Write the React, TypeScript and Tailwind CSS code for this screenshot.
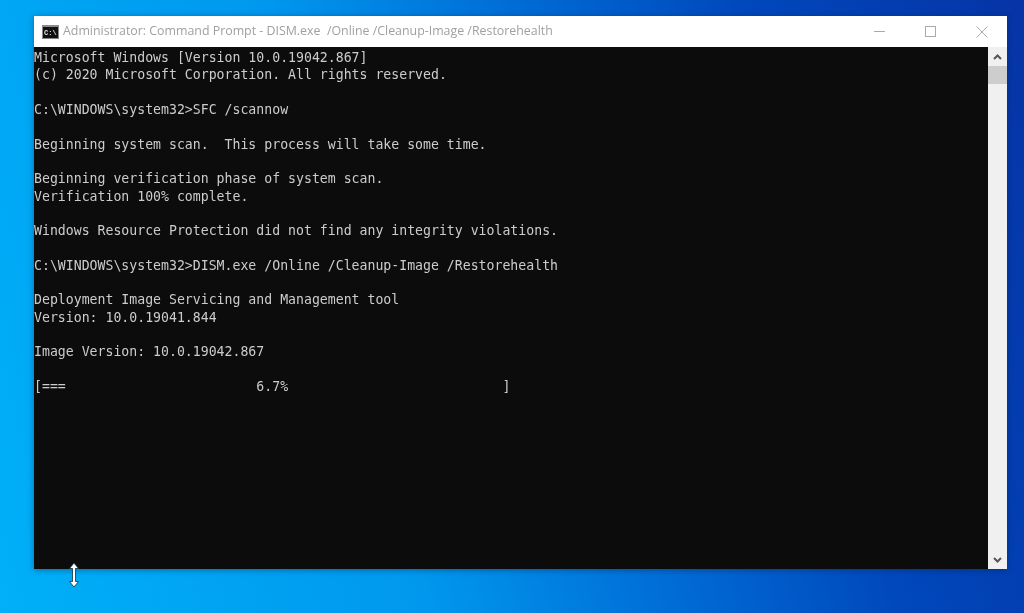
const lines = [
  "Microsoft Windows [Version 10.0.19042.867]",
  "(c) 2020 Microsoft Corporation. All rights reserved.",
  "",
  "C:\\WINDOWS\\system32>SFC /scannow",
  "",
  "Beginning system scan.  This process will take some time.",
  "",
  "Beginning verification phase of system scan.",
  "Verification 100% complete.",
  "",
  "Windows Resource Protection did not find any integrity violations.",
  "",
  "C:\\WINDOWS\\system32>DISM.exe /Online /Cleanup-Image /Restorehealth",
  "",
  "Deployment Image Servicing and Management tool",
  "Version: 10.0.19041.844",
  "",
  "Image Version: 10.0.19042.867",
  "",
  "[===                        6.7%                           ]",
];

export default function App() {
  return (
    <div className="relative h-[613px] w-[1024px] overflow-hidden bg-[linear-gradient(75deg,#00b0f8_0%,#0098ee_36%,#0070d8_55%,#0048bc_76%,#0634a6_100%)] pl-[34px] pt-[16px]">
      <div className="flex h-[553px] w-[973px] flex-col bg-white shadow-[0_1px_6px_rgba(0,30,80,0.45)]">
        <div className="flex h-[31px] shrink-0 items-center pl-[8px]">
          <svg width="17" height="14" viewBox="0 0 17 14" className="shrink-0 blur-[0.3px]">
            <rect width="17" height="14" fill="#8a8a8a" />
            <rect x="1" y="2" width="15" height="11" fill="#111" />
            <text x="2" y="10" fontSize="7" fontWeight="700" fill="#e8e8e8" fontFamily="'Liberation Mono', monospace">C:\</text>
          </svg>
          <span className="ml-[4px] whitespace-pre font-['Open_Sans',sans-serif] text-[12.38px] text-[#a0a0a0] blur-[0.3px]">
            Administrator: Command Prompt - DISM.exe  /Online /Cleanup-Image /Restorehealth
          </span>
          <div className="ml-auto flex h-full items-center">
            <div className="flex h-full w-[51px] items-center justify-center">
              <svg width="11" height="1" viewBox="0 0 11 1"><rect width="11" height="1" fill="#aaa" /></svg>
            </div>
            <div className="flex h-full w-[51px] items-center justify-center">
              <svg width="11" height="11" viewBox="0 0 11 11"><rect x="0.5" y="0.5" width="10" height="10" fill="none" stroke="#aaa" /></svg>
            </div>
            <div className="flex h-full w-[51px] items-center justify-center">
              <svg width="12" height="12" viewBox="0 0 12 12"><path d="M0.5 0.5 11.5 11.5M11.5 0.5 0.5 11.5" fill="none" stroke="#aaa" /></svg>
            </div>
          </div>
        </div>
        <div className="flex min-h-0 flex-1">
          <div className="min-w-0 flex-1 bg-[#0c0c0c] pt-[2px]">
            <div className="font-['DejaVu_Sans_Mono',monospace] text-[13.2px] leading-[17.32px] text-[#cccccc] blur-[0.35px]">
              {lines.map((l, i) => (
                <div key={i} className="h-[17.32px] whitespace-pre">{l}</div>
              ))}
            </div>
          </div>
          <div className="flex w-[19px] shrink-0 flex-col bg-[#f0f0f0]">
            <div className="flex h-[19px] items-center justify-center">
              <svg width="9" height="6" viewBox="0 0 9 6"><path d="M1 5 4.5 1.5 8 5" fill="none" stroke="#555" strokeWidth="2" /></svg>
            </div>
            <div className="h-[18px] bg-[#cdcdcd]" />
            <div className="flex-1" />
            <div className="flex h-[19px] items-center justify-center">
              <svg width="9" height="6" viewBox="0 0 9 6"><path d="M1 1 4.5 4.5 8 1" fill="none" stroke="#555" strokeWidth="2" /></svg>
            </div>
          </div>
        </div>
      </div>
      <svg width="12" height="26" viewBox="0 0 12 26" className="absolute left-[68px] top-[562px]">
        <path d="M6 1 10.5 6.5H7.5V19.5H10.5L6 25 1.5 19.5H4.5V6.5H1.5Z" fill="#fff" stroke="#10303f" strokeWidth="0.8" />
      </svg>
    </div>
  );
}
